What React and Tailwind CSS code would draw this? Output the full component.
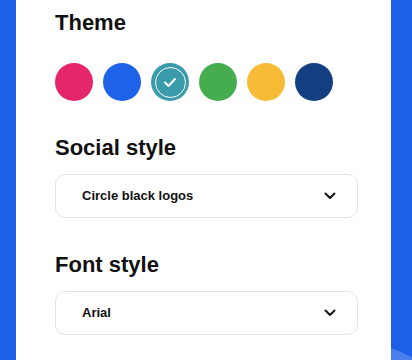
import React from "react";

const colors = [
  { c: "bg-[#e6266a]" },
  { c: "bg-[#1d62e8]" },
  { c: "bg-[#3a9cab]", selected: true },
  { c: "bg-[#46ad4f]" },
  { c: "bg-[#f7bb35]" },
  { c: "bg-[#133f80]" },
];

function Chevron() {
  return (
    <svg width="12" height="8" viewBox="0 0 12 8" fill="none">
      <path d="M1.5 1.5 L6 6 L10.5 1.5" stroke="#111" strokeWidth="2" strokeLinecap="round" strokeLinejoin="round" />
    </svg>
  );
}

function Select({ label }) {
  return (
    <div className="flex h-[44px] w-[303px] items-center justify-between rounded-[10px] border border-[#e3e3e3] pl-[26px] pr-[21px]">
      <span className="text-[13px] font-bold text-[#111]">{label}</span>
      <Chevron />
    </div>
  );
}

export default function App() {
  return (
    <div
      className="flex h-[360px] w-[412px] overflow-hidden bg-[#1d5fe7]"
      style={{ fontFamily: '"Liberation Sans", Arial, sans-serif' }}
    >
      <div className="w-[16px] shrink-0" />
      <div className="flex w-[375px] shrink-0 flex-col bg-white pl-[39px] pt-[10px]">
        <h2 className="text-[22px] font-bold leading-[26px] text-[#111]">Theme</h2>
        <div className="mt-[27px] flex gap-[10px]">
          {colors.map((col, i) => (
            <div key={i} className={`flex h-[38px] w-[38px] items-center justify-center rounded-full ${col.c}`}>
              {col.selected && (
                <div className="flex h-[31px] w-[31px] items-center justify-center rounded-full border border-white">
                  <svg width="14" height="11" viewBox="0 0 14 11" fill="none">
                    <path d="M2 5.5 L5.5 9 L12 2" stroke="white" strokeWidth="2" strokeLinecap="round" strokeLinejoin="round" />
                  </svg>
                </div>
              )}
            </div>
          ))}
        </div>
        <h2 className="mt-[34px] text-[22px] font-bold leading-[26px] text-[#111]">Social style</h2>
        <div className="mt-[13px]">
          <Select label="Circle black logos" />
        </div>
        <h2 className="mt-[34px] text-[22px] font-bold leading-[26px] text-[#111]">Font style</h2>
        <div className="mt-[13px]">
          <Select label="Arial" />
        </div>
      </div>
      <div className="relative flex-1 overflow-hidden">
        <div className="absolute left-[-201px] top-[339px] h-[300px] w-[300px] rounded-full bg-white/20" />
      </div>
    </div>
  );
}
